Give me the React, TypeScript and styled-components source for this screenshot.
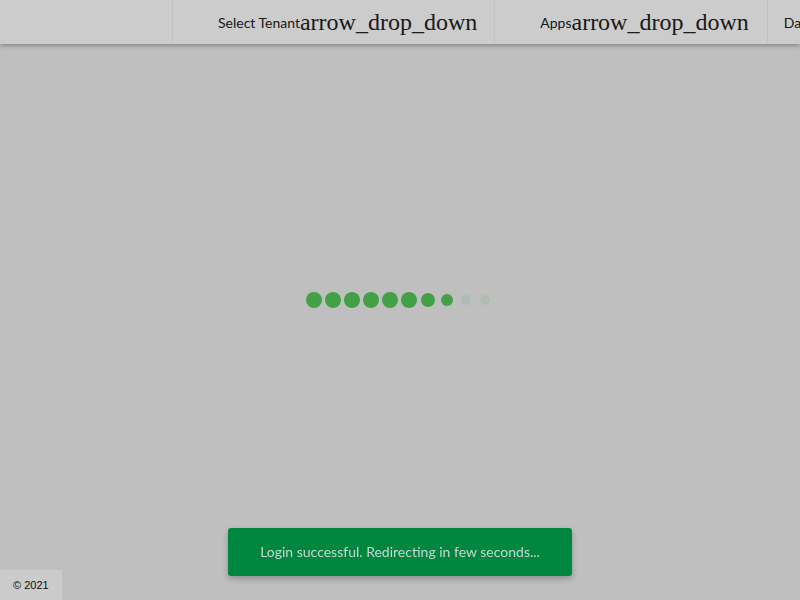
import React from "react";
import styled, { createGlobalStyle } from "styled-components";

const Global = createGlobalStyle`
  html, body { margin: 0; padding: 0; }
  body { font-family: Lato, "Liberation Sans", sans-serif; background: #efefef; overflow: hidden; }
`;

const Page = styled.div`
  height: 100vh;
  display: flex;
  flex-direction: column;
`;

const Header = styled.header`
  height: 44px;
  flex: none;
  display: flex;
  background: #ffffff;
  box-shadow: 0 2px 4px rgba(0, 0, 0, 0.28);
  position: relative;
  z-index: 1;
  overflow: hidden;
`;

const Brand = styled.div`
  width: 172px;
  flex: none;
`;

const NavItem = styled.div<{ $padLeft: number; $padRight: number }>`
  display: flex;
  align-items: center;
  flex: none;
  border-left: 1px solid #f3f3f3;
  padding-left: ${(p) => p.$padLeft}px;
  padding-right: ${(p) => p.$padRight}px;
  white-space: nowrap;
`;

const NavLabel = styled.span`
  font-family: Lato, sans-serif;
  font-size: 14px;
  color: #222;
`;

const DropIcon = styled.span`
  font-family: "Liberation Serif", serif;
  font-size: 24px;
  color: #222;
`;

const Main = styled.main`
  flex: 1;
`;

const Footer = styled.footer`
  flex: none;
  align-self: flex-start;
  height: 30px;
  display: flex;
  align-items: center;
  padding: 0 13px;
  background: #fefefe;
  font-family: "Liberation Sans", Arial, sans-serif;
  font-size: 11px;
  color: #111;
`;

const Overlay = styled.div`
  position: fixed;
  inset: 0;
  background: rgba(0, 0, 0, 0.2);
  z-index: 10;
  display: flex;
  align-items: center;
  justify-content: center;
`;

const Dots = styled.div`
  display: flex;
  align-items: center;
  width: 190px;
  margin-left: -2px;
`;

const DotSlot = styled.div`
  width: 19px;
  height: 16px;
  display: flex;
  align-items: center;
  justify-content: center;
`;

const Dot = styled.div<{ $size: number; $faded?: boolean }>`
  width: ${(p) => p.$size}px;
  height: ${(p) => p.$size}px;
  border-radius: 50%;
  background: ${(p) => (p.$faded ? "rgba(67, 160, 71, 0.12)" : "#43a047")};
`;

const Toast = styled.div`
  position: fixed;
  left: 228px;
  top: 528px;
  width: 344px;
  height: 48px;
  box-sizing: border-box;
  padding-bottom: 1px;
  border-radius: 3px;
  background: #00873f;
  color: #c9d6cd;
  font-family: Lato, sans-serif;
  font-size: 14px;
  display: flex;
  align-items: center;
  justify-content: center;
  box-shadow: 0 3px 6px rgba(0, 0, 0, 0.25);
  z-index: 20;
`;

const dots = [
  { s: 16 }, { s: 16 }, { s: 16 }, { s: 16 }, { s: 16 }, { s: 16 },
  { s: 14 }, { s: 12 }, { s: 10, f: true }, { s: 10, f: true },
];

export default function App() {
  return (
    <>
      <Global />
      <Page>
        <Header>
          <Brand />
          <NavItem $padLeft={45} $padRight={17}>
            <NavLabel>Select Tenant</NavLabel>
            <DropIcon>arrow_drop_down</DropIcon>
          </NavItem>
          <NavItem $padLeft={45} $padRight={18}>
            <NavLabel>Apps</NavLabel>
            <DropIcon>arrow_drop_down</DropIcon>
          </NavItem>
          <NavItem $padLeft={16} $padRight={16}>
            <NavLabel>Dashboard</NavLabel>
          </NavItem>
        </Header>
        <Main />
        <Footer>© 2021</Footer>
      </Page>
      <Overlay>
        <Dots>
          {dots.map((d, i) => (
            <DotSlot key={i}>
              <Dot $size={d.s} $faded={d.f} />
            </DotSlot>
          ))}
        </Dots>
      </Overlay>
      <Toast>Login successful. Redirecting in few seconds...</Toast>
    </>
  );
}
